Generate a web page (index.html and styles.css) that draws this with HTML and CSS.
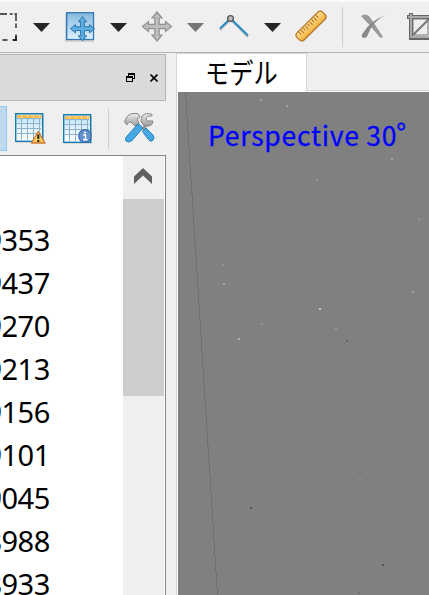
FILE: index.html
```html
<!DOCTYPE html>
<html lang="ja">
<head>
<meta charset="utf-8">
<title>モデル</title>
<link rel="stylesheet" href="styles.css">
</head>
<body>
<svg width="0" height="0" class="defs">
  <defs>
    <linearGradient id="sky" x1="0" y1="0" x2="0" y2="1"><stop offset="0" stop-color="#84b9de"/><stop offset="1" stop-color="#e0f2fe"/></linearGradient>
    <linearGradient id="cell" x1="0" y1="0" x2="0" y2="1"><stop offset="0" stop-color="#bce3f8"/><stop offset="1" stop-color="#fff"/></linearGradient>
    <linearGradient id="gold" x1="0" y1="0" x2="0" y2="1"><stop offset="0" stop-color="#ffe097"/><stop offset="1" stop-color="#f3b13c"/></linearGradient>
    <linearGradient id="steel" x1="0" y1="0" x2="0" y2="1"><stop offset="0" stop-color="#eee"/><stop offset="1" stop-color="#9a9a9a"/></linearGradient>
    <path id="cross" d="M0-14.5 5-8.5H2.2V-2.2H8.5V-5L14.5 0 8.5 5V2.2H2.2V8.5H5L0 14.5-5 8.5H-2.2V2.2H-8.5V5L-14.5 0-8.5-5V-2.2H-2.2V-8.5H-5Z"/>
    <g id="sheet">
      <path d="M1 2H29V30H1Z" fill="#bbb" opacity=".45"/>
      <rect x=".7" y=".7" width="27" height="27.6" fill="url(#cell)" stroke="#147bb2" stroke-width="1.4"/>
      <path d="M2 2H26.5V5H2Z" fill="#f9bc50"/>
      <path d="M2 5.6H26M2 10.5H26M2 15.5H26M2 20.5H26M6.5 5V27M12.5 5V27M18.5 5V27M24.5 5V27" stroke="#8fb0c7" fill="none"/>
      <path d="M6.5 2V5M12.5 2V5M18.5 2V5M24.5 2V5" stroke="#ffdc91"/>
    </g>
  </defs>
</svg>
<div class="app">
  <header class="toolbar">
    <svg width="26" height="50" viewBox="0 2 26 50"><path d="M0 14H7M10 14H12.5M14.5 14H17M16 13V21M16 23.500V28M16 34.500V41M12.500 40H17M2.500 40H7.500" fill="none" stroke="#555" stroke-width="1.8"/><path d="M13 40H17M16 36V41" stroke="#222" stroke-width="1.8"/></svg>
    <svg width="32" height="50" viewBox="26 2 32 50"><path d="M33 23H50L41.500 32Z" fill="#262626"/></svg>
    <svg width="44" height="50" viewBox="58 2 44 50"><path d="M65 14H94V42H65Z" fill="#aaa" opacity=".45"/><rect x="66.700" y="12.700" width="26.800" height="26.800" fill="url(#sky)" stroke="#3577b7" stroke-width="1.3"/><use href="#cross" transform="translate(82.500 28.700) scale(.83)" fill="#5caee3" stroke="#2870a8" stroke-width="1.2"/></svg>
    <svg width="32" height="50" viewBox="102 2 32 50"><path d="M110 23H127L118.500 32Z" fill="#262626"/></svg>
    <svg width="46" height="50" viewBox="134 2 46 50"><use href="#cross" transform="translate(157 26.500)" fill="#bdbdbd" stroke="#929292" stroke-width="1.2"/></svg>
    <svg width="34" height="50" viewBox="180 2 34 50"><path d="M187 23H204L195.500 32Z" fill="#747678"/></svg>
    <svg width="42" height="50" viewBox="214 2 42 50"><path d="M220 30 230.500 19.500 248 37" fill="none" stroke="#bbb" stroke-width="2"/><path d="M220 28.500 230.500 18.500 248 35.500" fill="none" stroke="#2a8bc4" stroke-width="2"/><circle cx="230.500" cy="18.500" r="2.900" fill="#bbb" stroke="#555" stroke-width="1.300"/></svg>
    <svg width="32" height="50" viewBox="256 2 32 50"><path d="M264 23H281L272.500 32Z" fill="#262626"/></svg>
    <svg width="46" height="50" viewBox="288 2 46 50"><g transform="translate(311 26) rotate(-44.500)"><rect x="-18" y="-4" width="36.500" height="10" rx="3.500" fill="#aaa" opacity=".5"/><rect x="-18" y="-5" width="36" height="10" rx="3.500" fill="url(#gold)" stroke="#b87424" stroke-width="1.200"/><path d="M-13-4V-1M-10-4V0M-7-4V-1M-4-4V0M-1-4V-1M2-4V0M5-4V-1M8-4V0M11-4V-1" stroke="#a96d20"/></g></svg>
    <span class="rule"></span>
    <svg width="52" height="50" viewBox="344 2 52 50"><path d="M361 16Q365 13 369 16 374 23 383 37 380 39 378 35 369 24 361 16Z" fill="#999"/><path d="M386 15Q373 20 367 36.500 365 39 362 37 361 35 363 33 371 20 386 15Z" fill="#888"/></svg>
    <svg width="33" height="50" viewBox="396 2 33 50"><path d="M407 17H430M411 13V38H430" fill="none" stroke="#666" stroke-width="4"/><path d="M408 17H430M411 14V37H430" fill="none" stroke="#aaa" stroke-width="2"/><path d="M413 19H428V35H413Z" fill="#eee" stroke="#777"/><path d="M413 35 429 19" stroke="#777" stroke-width="2"/></svg>
  </header>
  <div class="workspace">
    <aside class="dock">
      <div class="dock-title">
        <svg width="9" height="9" viewBox="0 0 9 9" shape-rendering="crispEdges"><path d="M2 0H9V6H7V5H8V2H3V3H2ZM0 3H7V9H0Z" fill="#000"/><path d="M1 5H6V8H1Z" fill="#dadada"/></svg>
        <svg width="8" height="8" viewBox="0 0 8 8"><path d="M.5.500 7.500 7.500M7.500.500.500 7.500" stroke="#000" stroke-width="1.600"/></svg>
      </div>
      <div class="dock-tools">
        <span class="pressed"></span>
        <svg class="t1" width="32" height="33"><use href="#sheet"/><path d="M23.200 18.500 30 30H16.500Z" fill="#fccb56" stroke="#cb7931" stroke-width="1.300" stroke-linejoin="round"/><path d="M23.300 21.500V26M23.300 27V29" stroke="#222" stroke-width="2"/></svg>
        <svg class="t2" width="32" height="33"><use href="#sheet"/><circle cx="22" cy="22" r="6.300" fill="#6492cc" stroke="#3c6eaf" stroke-width="1.200"/><path d="M21 18.500H23M20 21H22.500V25.500M20 25.700H24.500" fill="none" stroke="#fff" stroke-width="1.500"/></svg>
        <span class="rule small"></span>
        <svg class="t3" width="32" height="32" viewBox="124 112 32 32"><path d="M135 124 139 129M142 130 147 124" stroke="#999" stroke-width="3"/><path d="M124.500 122Q127 114 133 113.500H138L140 117 137 119 139 123 135 126 131 122Q128 121 127 125Z" fill="url(#steel)" stroke="#888"/><path d="M152 114.500Q146 112 142 116L141 121 144 126 149 126Q153 125 153 121H147L146 118 148 116H152Z" fill="url(#steel)" stroke="#888"/><path d="M138.500 123.500 143 128 131.500 141Q128 143 126 141 124.500 139 127 136Z" fill="#45a8e3" stroke="#2584bd"/><path d="M142.500 131.500 146 128 153.500 135.500Q155 139 152 141 150 142 148 139Z" fill="#45a8e3" stroke="#2584bd"/></svg>
      </div>
      <div class="table">
        <div class="rows">
          <div>9353</div><div>9437</div><div>9270</div><div>9213</div><div>9156</div><div>9101</div><div>9045</div><div>8988</div><div>8933</div>
        </div>
        <div class="scrollbar">
          <div class="up"><svg width="18" height="16" viewBox="0 0 18 16"><path d="M0 16V8.500L9 0 18 8.500V16L9 7.500Z" fill="#606060"/></svg></div>
          <div class="thumb"></div>
        </div>
      </div>
    </aside>
    <main class="model">
      <div class="tabs"><div class="tab"><span>モデル</span></div><div class="tab-rest"></div></div>
      <div class="view">
        <svg width="251" height="503" viewBox="178 92 251 503" shape-rendering="crispEdges">
          <path d="M185.500 92 217.500 595" stroke="#707070" stroke-width="1"/>
          <g fill="#a5a890"><path d="M260 99h2v2h-2zM286 105h2v2h-2zM391 158h2v2h-2zM223 283h2v2h-2zM412 291h2v2h-2z"/></g>
          <path d="M319 308h2v2h-2z" fill="#c5c8b0"/>
          <path d="M238 338h2v2h-2z" fill="#a0bd9b"/>
          <path d="M316 179h2v2h-2zM418 218h2v2h-2zM222 264h2v2h-2z" fill="#96977f"/>
          <path d="M321 181h2v2h-2zM284 299h2v2h-2z" fill="#8a8c75"/>
          <path d="M339 246h2v2h-2zM340 287h2v2h-2zM398 158h1v2h-1z" fill="#7b8b75"/>
          <path d="M261 323h2v2h-2zM335 328h2v2h-2z" fill="#82a287"/>
          <path d="M346 340h2v2h-2z" fill="#58754f"/>
          <path d="M391 376h2v2h-2z" fill="#648d71"/>
          <path d="M359 472h2v2h-2zM351 543h2v2h-2zM358 592h2v2h-2z" fill="#6f765e"/>
          <path d="M250 507h2v2h-2zM382 564h2v2h-2z" fill="#50564a"/>
        </svg>
        <div class="caption">Perspective 30<span class="deg">°</span></div>
      </div>
    </main>
  </div>
</div>
</body>
</html>
```
FILE: styles.css
```css
body { margin: 0; background: #efefef; }
svg { display: block; flex: none; }
.defs { position: absolute; }
.app { width: 429px; height: 595px; overflow: hidden; display: flex; flex-direction: column; }
.toolbar { height: 50px; border-top: 2px solid #fafafa; border-bottom: 1px solid #b5b3b5; display: flex; flex: none; overflow: hidden; }
.rule { width: 1px; height: 40px; margin: 5px 1px 0 8px; background: #cecece; flex: none; }
.workspace { flex: 1; display: flex; min-height: 0; }
.dock { width: 166px; padding-top: 1px; display: flex; flex-direction: column; flex: none; }
.dock-title { box-sizing: border-box; height: 47px; background: #dadada; border: 1px solid #b5b5b5; border-left: 0; display: flex; align-items: center; justify-content: flex-end; gap: 15px; padding-right: 7px; flex: none; }
.dock-tools { height: 54px; display: flex; align-items: flex-start; flex: none; }
.pressed { box-sizing: border-box; width: 7px; height: 45px; margin-top: 5px; background: #bed9f0; border: 1px solid #91c8f3; border-left: 0; }
.t1 { margin: 12px 0 0 8px; }
.t2 { margin: 13px 0 0 16px; }
.rule.small { margin: 8px 0 0 13px; }
.t3 { margin: 11px 0 0 15px; }
.table { flex: 1; min-height: 0; display: flex; border-top: 1px solid #858290; border-right: 1px solid #858290; background: #fff; }
.rows { width: 123px; padding-top: 62px; overflow: hidden; font: 29px/43px "Noto Sans", sans-serif; letter-spacing: -.5px; color: #000; }
.rows div { width: 49.8px; height: 43px; display: flex; justify-content: flex-end; }
.scrollbar { width: 41px; background: #efefef; border-right: 1px solid #fff; }
.up { height: 43px; display: flex; justify-content: center; align-items: center; box-sizing: border-box; padding: 0 2px 3px 0; }
.thumb { height: 197px; background: #cdcdcd; }
.model { flex: 1; margin-left: 10px; border-left: 1px solid #d5d5d5; display: flex; flex-direction: column; min-width: 0; }
.tabs { display: flex; height: 39px; flex: none; }
.tab { box-sizing: border-box; width: 130px; border-top: 1px solid #d5d5d5; border-right: 1px solid #d5d5d5; background: #fff; padding-left: 28px; font: 28.500px/36px "Noto Sans CJK JP", sans-serif; }
.tab span { display: inline-block; transform: scaleX(.85); transform-origin: 0 0; }
.tab-rest { flex: 1; box-sizing: border-box; border-bottom: 1px solid #fff; box-shadow: inset 0 -1px #d5d5d5; }
.view { flex: 1; border-left: 1px solid #fff; background: #808080; position: relative; }
.caption { position: absolute; left: 30px; top: 23px; color: #00f; font: 26.5px/40px "Noto Sans CJK JP", sans-serif; letter-spacing: .75px; white-space: nowrap; -webkit-text-stroke: .3px #00f; }
.deg { position: relative; top: -3px; left: -1px; }
```
